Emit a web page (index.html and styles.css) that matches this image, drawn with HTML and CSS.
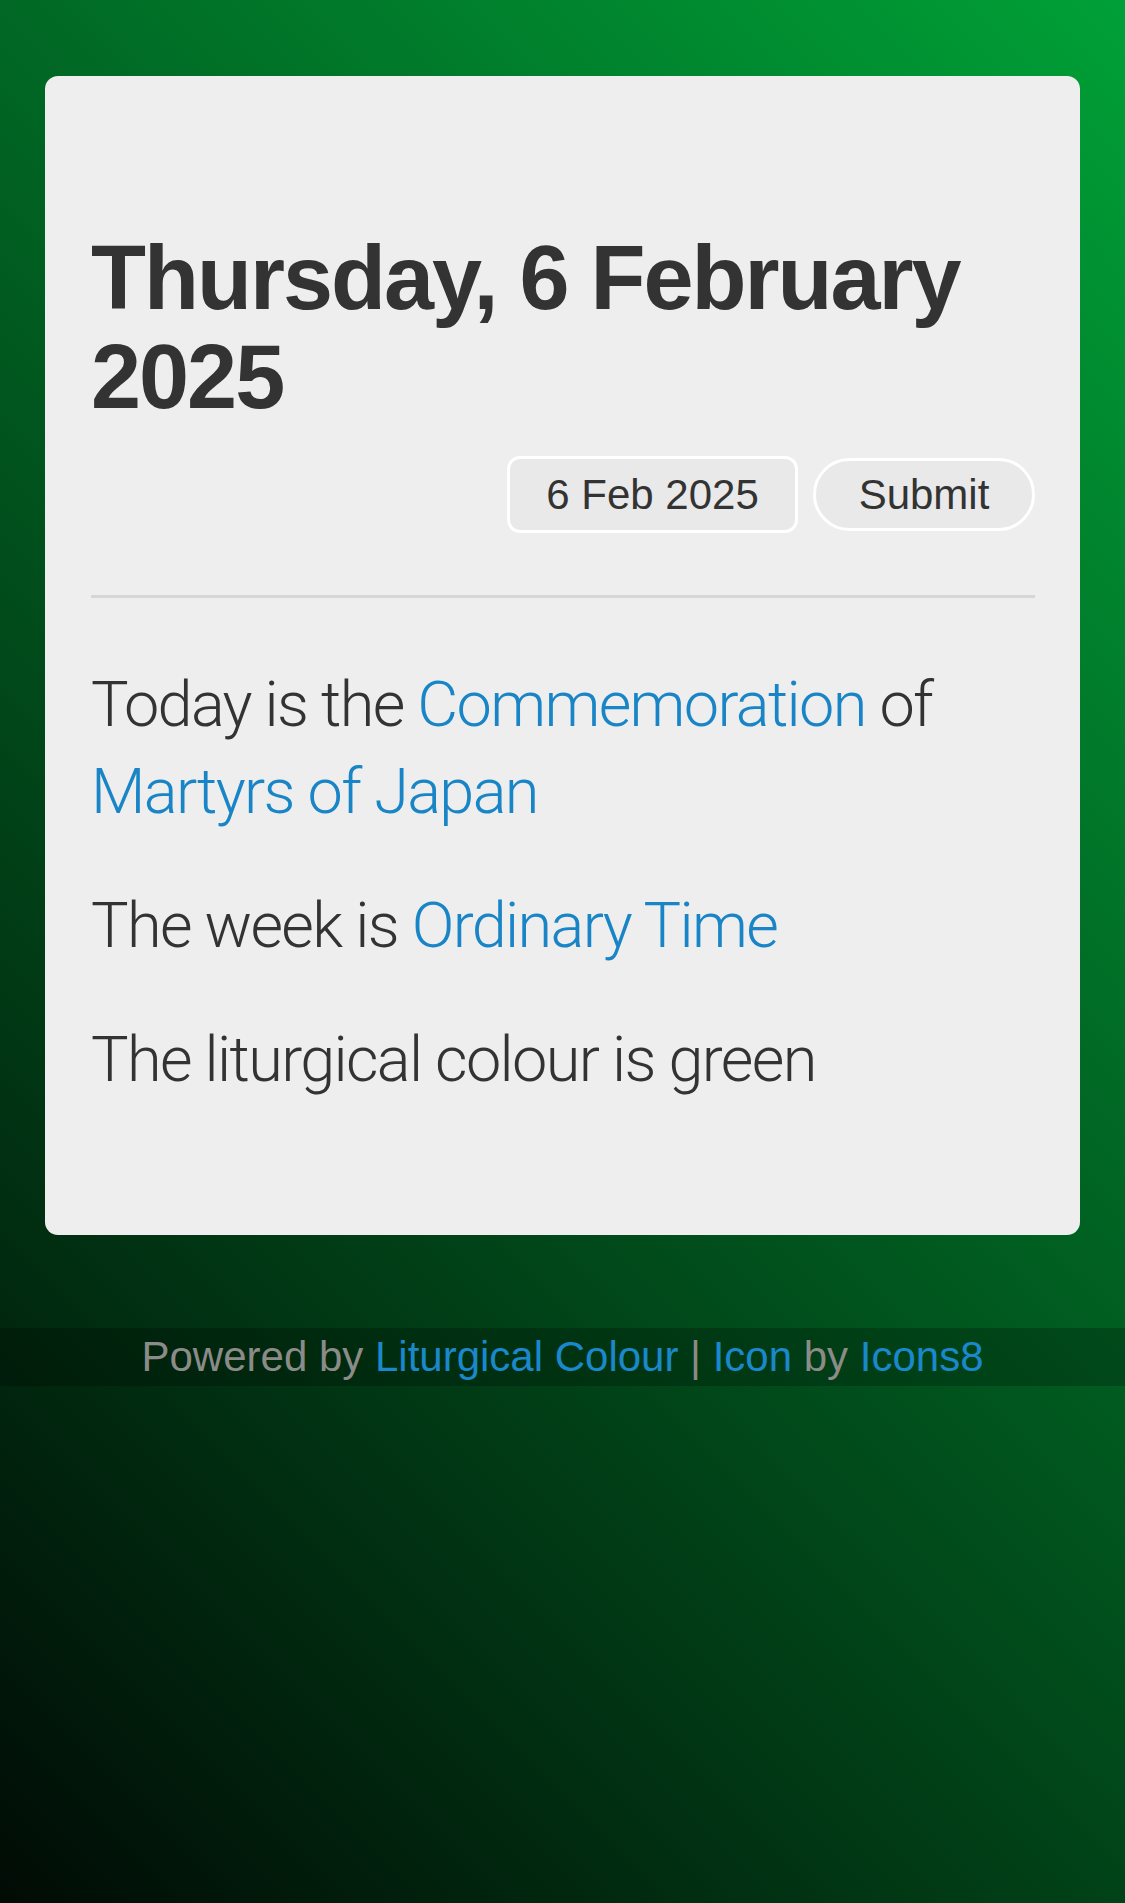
FILE: index.html
```html
<!DOCTYPE html>
<html lang="en">
<head>
<meta charset="utf-8">
<title>Liturgical Colour</title>
<link rel="stylesheet" href="styles.css">
</head>
<body>
<main class="card">
  <h1 class="title">Thursday, 6 February 2025</h1>
  <form class="controls">
    <input class="date-field" type="text" value="6 Feb 2025" readonly>
    <button class="submit" type="button">Submit</button>
  </form>
  <hr class="divider">
  <p class="line">Today is the <a href="#">Commemoration</a> of <a href="#">Martyrs of Japan</a></p>
  <p class="line">The week is <a href="#">Ordinary Time</a></p>
  <p class="line">The liturgical colour is green</p>
</main>
<footer class="footer">Powered by <a href="#">Liturgical Colour</a> | <a href="#">Icon</a> by <a href="#">Icons8</a></footer>
</body>
</html>
```

FILE: styles.css
```css
html {
  min-height: 100%;
  background: linear-gradient(45deg, #010b05 0%, #00a037 100%);
  background-attachment: fixed;
}

body {
  margin: 0;
  min-height: 1903px;
  font-family: "Liberation Sans", Arial, sans-serif;
  color: #333;
}

.card {
  margin: 76px 45px 0 45px;
  padding: 153px 45px 132px 46px;
  background: #eeeeee;
  border-radius: 13px;
}

.title {
  margin: 0;
  font-family: "Liberation Sans", Arial, sans-serif;
  font-weight: 700;
  font-size: 90px;
  line-height: 99px;
  letter-spacing: -2px;
  color: #333;
}

.controls {
  display: flex;
  justify-content: flex-end;
  align-items: center;
  gap: 15px;
  margin: 29px 0 0 0;
}

.date-field {
  box-sizing: border-box;
  width: 291px;
  height: 77px;
  padding: 0;
  margin: 0;
  border: 3px solid #ffffff;
  border-radius: 13px;
  background: #e9e9e9;
  font-family: "Liberation Sans", Arial, sans-serif;
  font-size: 42px;
  color: #333;
  text-align: center;
  outline: none;
}

.submit {
  box-sizing: border-box;
  width: 222px;
  height: 73px;
  padding: 0;
  margin: 0;
  border: 3px solid #ffffff;
  border-radius: 40px;
  background: #e9e9e9;
  font-family: "Liberation Sans", Arial, sans-serif;
  font-size: 42px;
  color: #333;
}

.divider {
  margin: 62px 0 0 0;
  border: 0;
  height: 3px;
  background: #d6d6d6;
}

.line {
  margin: 47px 0 0 0;
  font-family: Roboto, "Liberation Sans", sans-serif;
  font-weight: 300;
  font-size: 63px;
  line-height: 87px;
  letter-spacing: -1.65px;
  color: #333;
}

.divider + .line {
  margin-top: 63px;
}

.line a {
  color: #1a85c6;
  text-decoration: none;
}

.footer {
  margin-top: 93px;
  height: 58px;
  line-height: 58px;
  background: rgba(0, 0, 0, 0.22);
  text-align: center;
  font-family: "Liberation Sans", Arial, sans-serif;
  font-size: 42px;
  color: #8b8b88;
}

.footer a {
  color: #1a88cb;
  text-decoration: none;
}
```
